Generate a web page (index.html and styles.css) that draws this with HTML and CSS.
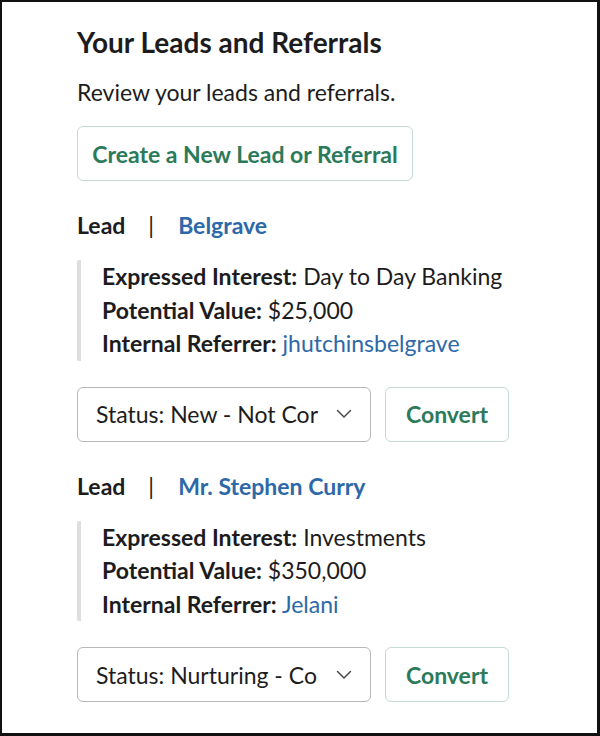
FILE: index.html
```html
<!DOCTYPE html>
<html lang="en">
<head>
    <meta charset="UTF-8">
    <meta name="viewport" content="width=device-width, initial-scale=1.0">
    <title>Your Leads and Referrals</title>
    <link rel="stylesheet" href="styles.css">
</head>
<body>

    <div class="frame">
        <div class="modal-title">Your Leads and Referrals</div>
        <div class="modal-text">Review your leads and referrals.</div>
        <button class="btn create-btn">Create a New Lead or Referral</button>

        <!-- Lead: Belgrave -->
        <div class="lead">
            <div class="lead-header">
                <span class="lead-type">Lead</span>
                <span class="divider">|</span>
                <a href="#" class="lead-name">Belgrave</a>
            </div>
            <div class="lead-details">
                <div><b>Expressed Interest:</b> Day to Day Banking</div>
                <div><b>Potential Value:</b> $25,000</div>
                <div><b>Internal Referrer:</b> <a href="#">jhutchinsbelgrave</a></div>
            </div>
            <div class="lead-actions">
                <div class="status-select">
                    <span class="status-text">Status: New - Not Cor</span>
                    <svg class="chevron" width="16" height="10" viewBox="0 0 16 10">
                        <path d="M1.5 1.5 L8 8 L14.5 1.5" fill="none" stroke="#4a4a4a" stroke-width="1.5" stroke-linecap="round" stroke-linejoin="round"/>
                    </svg>
                </div>
                <button class="btn convert-btn">Convert</button>
            </div>
        </div>

        <!-- Lead: Mr. Stephen Curry -->
        <div class="lead">
            <div class="lead-header">
                <span class="lead-type">Lead</span>
                <span class="divider">|</span>
                <a href="#" class="lead-name">Mr. Stephen Curry</a>
            </div>
            <div class="lead-details">
                <div><b>Expressed Interest:</b> Investments</div>
                <div><b>Potential Value:</b> $350,000</div>
                <div><b>Internal Referrer:</b> <a href="#">Jelani</a></div>
            </div>
            <div class="lead-actions">
                <div class="status-select">
                    <span class="status-text">Status: Nurturing - Co</span>
                    <svg class="chevron" width="16" height="10" viewBox="0 0 16 10">
                        <path d="M1.5 1.5 L8 8 L14.5 1.5" fill="none" stroke="#4a4a4a" stroke-width="1.5" stroke-linecap="round" stroke-linejoin="round"/>
                    </svg>
                </div>
                <button class="btn convert-btn">Convert</button>
            </div>
        </div>
    </div>

</body>
</html>
```

FILE: styles.css
```css
body {
    margin: 0;
    font-family: Lato, "Open Sans", sans-serif;
    color: #1d1c1d;
    background-color: #fff;
}

.frame {
    width: 600px;
    height: 736px;
    box-sizing: border-box;
    border: 2px solid #111;
    border-right-width: 3px;
    border-bottom-width: 3px;
    padding: 22px 75px 0 75px;
    overflow: hidden;
}

.modal-title {
    font-size: 28px;
    font-weight: 700;
    line-height: 36px;
}

.modal-text {
    font-size: 23px;
    line-height: 32px;
    margin-top: 16px;
}

.btn {
    font-family: Lato, "Open Sans", sans-serif;
    font-size: 23px;
    font-weight: 700;
    color: #2b7a5a;
    background-color: #fff;
    border: 1.5px solid #c5dbd0;
    border-radius: 6px;
    height: 55px;
    padding: 0 12px;
    cursor: pointer;
}

.create-btn {
    display: block;
    margin-top: 18px;
    width: 336px;
}

.lead-header {
    margin-top: 28px;
    font-size: 23px;
    line-height: 32px;
    display: flex;
    align-items: center;
}

.lead-type {
    font-weight: 700;
}

.divider {
    margin: 0 24px 0 23px;
}

.lead-name {
    font-weight: 700;
    color: #2d68a8;
    text-decoration: none;
}

.lead-details {
    margin-top: 19px;
    border-left: 4px solid #dedede;
    border-radius: 2px;
    padding-left: 21px;
    font-size: 23px;
    line-height: 33.5px;
}

.lead-details b {
    font-weight: 700;
}

.lead-details a {
    color: #2d68a8;
    text-decoration: none;
}

.lead-actions {
    display: flex;
    gap: 14px;
    margin-top: 26px;
}

.status-select {
    width: 294px;
    height: 55px;
    box-sizing: border-box;
    border: 1.5px solid #b8b8b8;
    border-radius: 6px;
    display: flex;
    align-items: center;
    padding: 0 18px;
    font-size: 23px;
}

.status-text {
    flex: 1;
    white-space: nowrap;
    overflow: hidden;
    margin-right: 12px;
}

.chevron {
    flex-shrink: 0;
}

.convert-btn {
    width: 124px;
}
```
